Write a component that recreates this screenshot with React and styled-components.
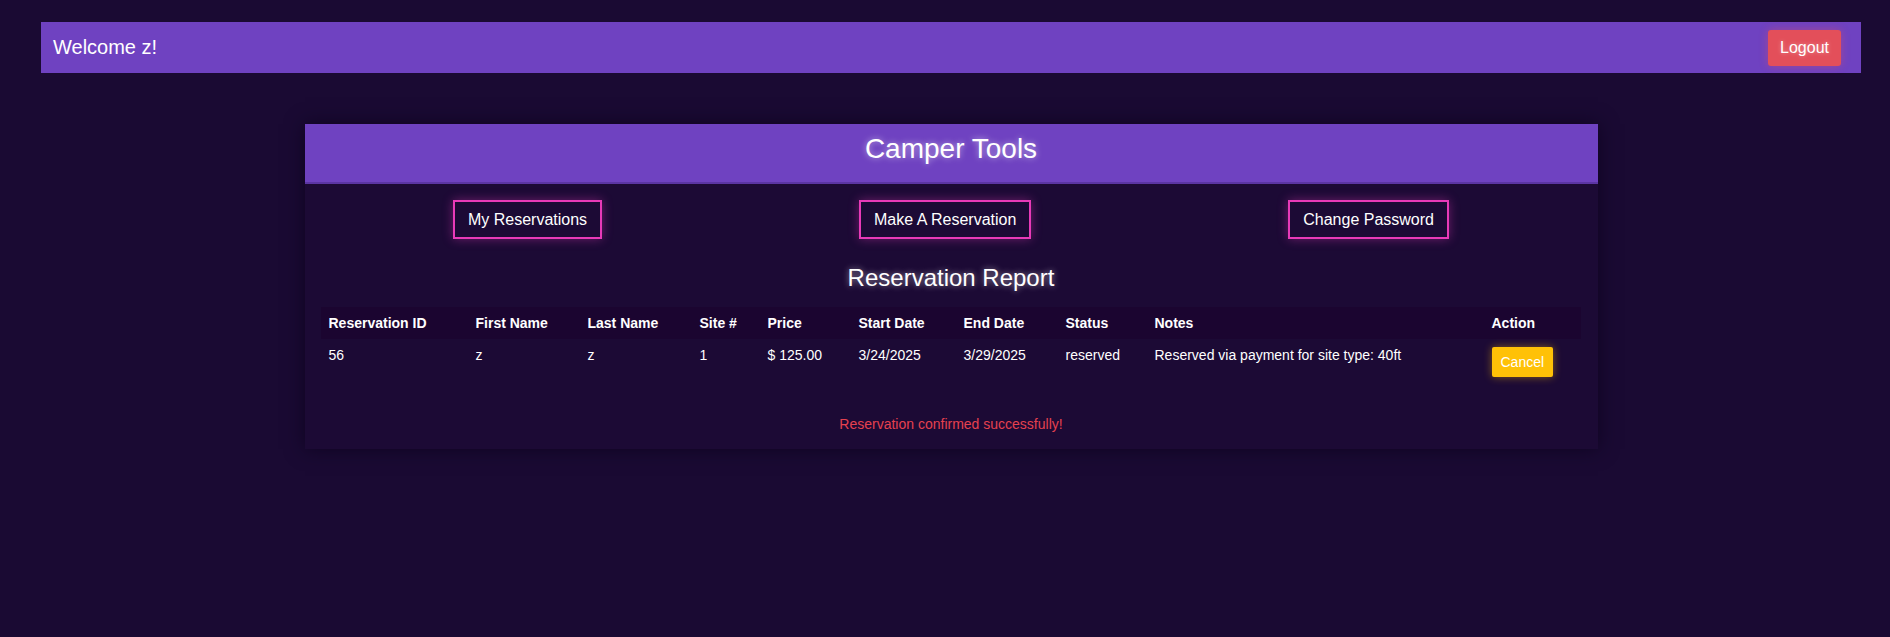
import React from 'react'
import styled, { createGlobalStyle } from 'styled-components'

const GlobalStyle = createGlobalStyle`
  body {
    margin: 0;
    background-color: #1a0a33;
    font-family: 'Liberation Sans', Arial, sans-serif;
    color: #fff;
  }
`

const Page = styled.div`
  min-height: 637px;
  padding: 22px 29px 0 41px;
  box-sizing: border-box;
`

const TopBar = styled.header`
  height: 51px;
  background-color: #6f42c1;
  display: flex;
  align-items: center;
  justify-content: space-between;
  padding: 0 20px 0 12px;
`

const Welcome = styled.span`
  font-size: 20px;
  color: #fff;
`

const LogoutButton = styled.button`
  height: 36px;
  padding: 0 12px;
  border: none;
  border-radius: 3px;
  background-color: #e34f5a;
  color: #fff;
  font-family: inherit;
  font-size: 16px;
  box-shadow: 0 0 8px rgba(227, 79, 90, 0.45);
  text-shadow: 0 0 4px rgba(255, 255, 255, 0.4);
  cursor: pointer;
`

const Card = styled.section`
  width: 1293px;
  margin: 51px auto 0;
  background-color: #1c0a35;
  box-shadow: 0 0 18px rgba(10, 0, 25, 0.7);
  padding-bottom: 17px;
`

const CardHeader = styled.h1`
  margin: 0;
  height: 58px;
  line-height: 50px;
  background-color: #6f42c1;
  border-bottom: 2px solid #5b35a3;
  text-align: center;
  font-size: 28px;
  font-weight: normal;
  color: #fff;
  text-shadow: 0 0 6px rgba(255, 255, 255, 0.55);
`

const NavRow = styled.nav`
  display: flex;
  justify-content: space-around;
  padding: 16px 20px 0;
`

const NavButton = styled.button`
  padding: 8px 13px;
  border: 2px solid #e83ab8;
  background-color: transparent;
  color: #fff;
  font-family: inherit;
  font-size: 16px;
  line-height: 19px;
  box-shadow: 0 0 10px rgba(232, 58, 184, 0.4);
  cursor: pointer;
`

const ReportTitle = styled.h2`
  margin: 25px 0 15px;
  text-align: center;
  font-size: 24px;
  line-height: 28px;
  font-weight: normal;
  color: #fff;
  text-shadow: 0 0 6px rgba(255, 255, 255, 0.55);
`

const Table = styled.table`
  width: 1260px;
  margin: 0 16px;
  border-collapse: collapse;
  table-layout: fixed;
  font-size: 14px;
`

const Col = styled.col`
  width: ${p => p.$w}px;
`

const HeadCell = styled.th`
  padding: 8px;
  line-height: 16px;
  text-align: left;
  font-weight: bold;
  background-color: #1b0530;
`

const Cell = styled.td`
  padding: 8px;
  line-height: 16px;
  vertical-align: top;
  text-align: left;
  white-space: nowrap;
`

const CancelButton = styled.button`
  height: 30px;
  padding: 0 9px;
  border: none;
  border-radius: 2px;
  background-color: #ffc107;
  color: #fff;
  font-family: inherit;
  font-size: 14px;
  box-shadow: 0 0 8px rgba(255, 193, 7, 0.45);
  cursor: pointer;
`

const Message = styled.p`
  margin: 31px 0 0;
  text-align: center;
  font-size: 14px;
  line-height: 16px;
  color: #e5414f;
`

const columns = [
  ['Reservation ID', 147],
  ['First Name', 112],
  ['Last Name', 112],
  ['Site #', 68],
  ['Price', 91],
  ['Start Date', 105],
  ['End Date', 102],
  ['Status', 89],
  ['Notes', 337],
  ['Action', 97],
]

const reservations = [
  {
    id: 56,
    first: 'z',
    last: 'z',
    site: 1,
    price: '$ 125.00',
    start: '3/24/2025',
    end: '3/29/2025',
    status: 'reserved',
    notes: 'Reserved via payment for site type: 40ft',
  },
]

const App = () => {
  return (
    <>
      <GlobalStyle />
      <Page>
        <TopBar>
          <Welcome>Welcome z!</Welcome>
          <LogoutButton>Logout</LogoutButton>
        </TopBar>

        <Card>
          <CardHeader>Camper Tools</CardHeader>
          <NavRow>
            <NavButton>My Reservations</NavButton>
            <NavButton>Make A Reservation</NavButton>
            <NavButton>Change Password</NavButton>
          </NavRow>

          <ReportTitle>Reservation Report</ReportTitle>
          <Table>
            <colgroup>
              {columns.map(([name, w]) => <Col key={name} $w={w} />)}
            </colgroup>
            <thead>
              <tr>
                {columns.map(([name]) => <HeadCell key={name}>{name}</HeadCell>)}
              </tr>
            </thead>
            <tbody>
              {reservations.map(r => (
                <tr key={r.id}>
                  <Cell>{r.id}</Cell>
                  <Cell>{r.first}</Cell>
                  <Cell>{r.last}</Cell>
                  <Cell>{r.site}</Cell>
                  <Cell>{r.price}</Cell>
                  <Cell>{r.start}</Cell>
                  <Cell>{r.end}</Cell>
                  <Cell>{r.status}</Cell>
                  <Cell>{r.notes}</Cell>
                  <Cell><CancelButton>Cancel</CancelButton></Cell>
                </tr>
              ))}
            </tbody>
          </Table>
          <Message>Reservation confirmed successfully!</Message>
        </Card>
      </Page>
    </>
  )
}

export default App
